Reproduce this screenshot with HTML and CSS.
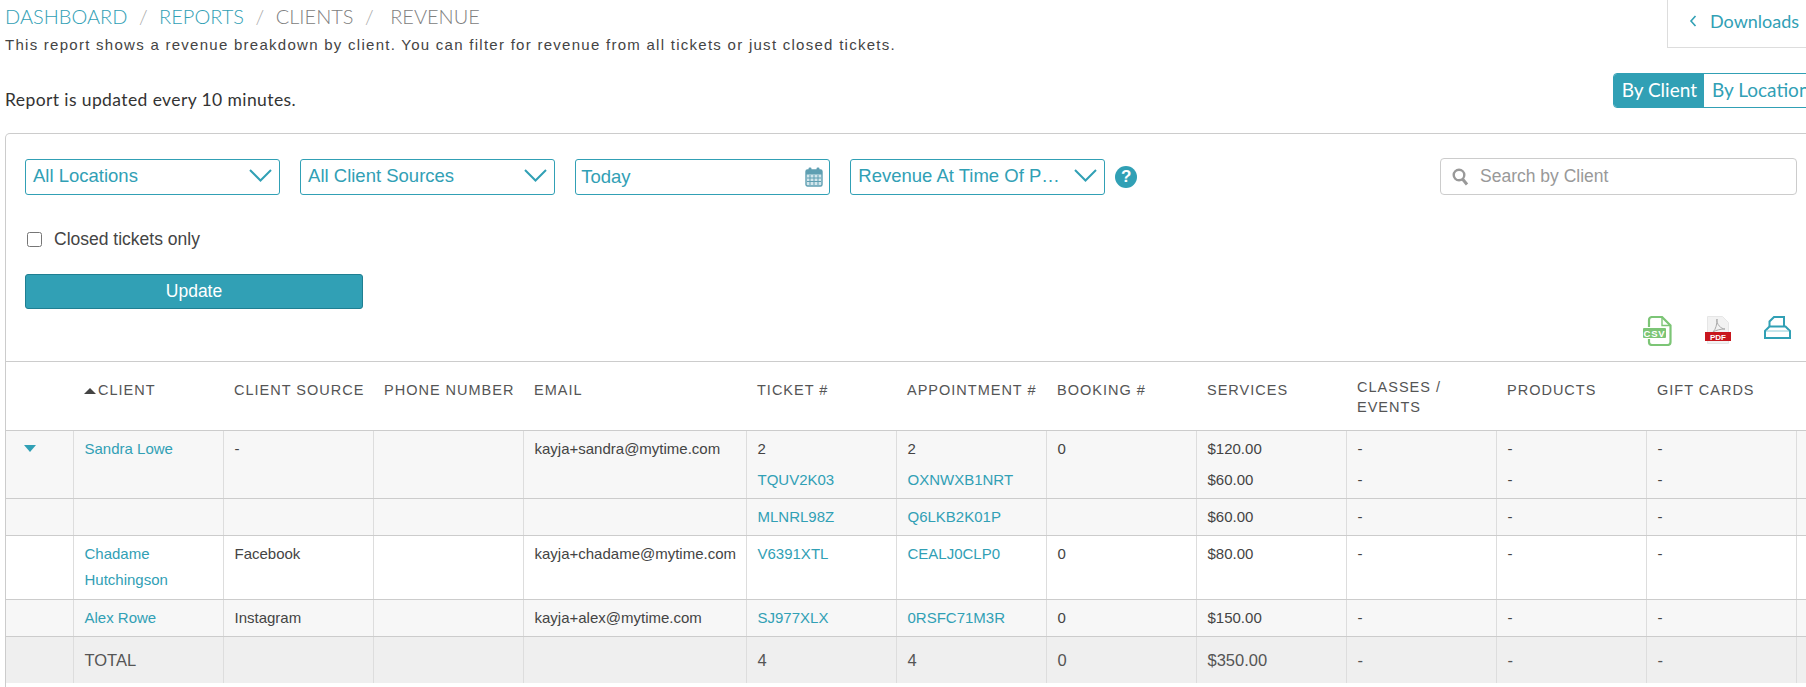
FILE: index.html
```html
<!DOCTYPE html>
<html>
<head>
    <meta charset="utf-8">
    <title>Revenue by client</title>
    <link rel="stylesheet" href="styles.css">
</head>
<body>
<div class="page">
    <div class="topRow">
        <div>
            <div class="crumbs">
                <a>DASHBOARD</a><span class="sep">/</span><a>REPORTS</a><span class="sep">/</span><span>CLIENTS</span><span class="sep">/</span><span class="last">REVENUE</span>
            </div>
            <p class="desc">This report shows a revenue breakdown by client. You can filter for revenue from all tickets or just closed tickets.</p>
        </div>
        <div class="downloads">
            <svg width="8" height="14" viewBox="0 0 8 14"><path d="M6.500 2 2 7l4.500 5" fill="none" stroke="#31a0b5" stroke-width="1.600"/></svg>
            <span>Downloads</span>
        </div>
    </div>
    <div class="noticeRow">
        <div class="notice">Report is updated every 10 minutes.</div>
        <div class="toggle">
            <span class="toggleBtn active">By Client</span>
            <span class="toggleBtn">By Location</span>
        </div>
    </div>

    <div class="panel">
        <div class="filters">
            <div class="pick">
                <span class="pickText">All Locations</span>
                <svg class="chev" width="23" height="13" viewBox="0 0 23 13"><path d="M1 1l10.500 10.500L22 1" fill="none" stroke="#31a0b5" stroke-width="2"/></svg>
            </div>
            <div class="pick">
                <span class="pickText">All Client Sources</span>
                <svg class="chev" width="23" height="13" viewBox="0 0 23 13"><path d="M1 1l10.500 10.500L22 1" fill="none" stroke="#31a0b5" stroke-width="2"/></svg>
            </div>
            <div class="pick date">
                <span class="pickText">Today</span>
                <svg width="18" height="20" viewBox="0 0 18 20">
                    <rect x="1" y="3" width="16" height="16" rx="1.500" fill="#d3e6ec" stroke="#5f9fb2" stroke-width="1.400"/>
                    <rect x="1" y="3" width="16" height="4.500" fill="#5f9fb2"/>
                    <path d="M5 8v10M9 8v10M13 8v10M2 11h14M2 14.500h14" stroke="#5f9fb2"/>
                    <rect x="3.500" y="0.500" width="3" height="5" rx="1.200" fill="#5f9fb2"/>
                    <rect x="11.500" y="0.500" width="3" height="5" rx="1.200" fill="#5f9fb2"/>
                </svg>
            </div>
            <div class="pick">
                <span class="pickText">Revenue At Time Of P…</span>
                <svg class="chev" width="23" height="13" viewBox="0 0 23 13"><path d="M1 1l10.500 10.500L22 1" fill="none" stroke="#31a0b5" stroke-width="2"/></svg>
            </div>
            <div class="help">?</div>
            <div class="search">
                <svg width="17" height="18" viewBox="0 0 17 18"><circle cx="7" cy="7" r="5.300" fill="none" stroke="#999" stroke-width="2.400"/><path d="M10.500 11l4.500 5.500" stroke="#999" stroke-width="3"/></svg>
                <span>Search by Client</span>
            </div>
        </div>
        <label class="closed"><input type="checkbox"> Closed tickets only</label>
        <button class="update">Update</button>
        <div class="exports">
            <svg width="29" height="30" viewBox="0 0 29 30">
                <path d="M6 11V4a3 3 0 0 1 3-3h10l8.500 8.500V26a3 3 0 0 1-3 3H9a3 3 0 0 1-3-3v-3" fill="none" stroke="#7cc576" stroke-width="2.200"/>
                <path d="M19 1v8.500h8.500" fill="none" stroke="#7cc576" stroke-width="1.400"/>
                <rect x="0" y="12" width="23" height="10" rx="1" fill="#7cc576"/>
                <text x="11.500" y="20.500" class="csvText">CSV</text>
            </svg>
            <svg width="26" height="28" viewBox="0 0 26 28">
                <path d="M2.500 .5h15l6 6v21h-21z" fill="#f2f2f2" stroke="#e6e6e6"/>
                <path d="M12 3c-1 5 4 10 8 10-4 0-9 1-12 3 3-3 4-8 4-13z" fill="none" stroke="#aaa"/>
                <rect x="0" y="16" width="26" height="9" fill="#c8161d"/>
                <text x="13" y="23.500" class="pdfText">PDF</text>
            </svg>
            <svg width="27" height="23" viewBox="0 0 27 23">
                <path d="M5.500 10.500V5.500L10 1h10v9.500" fill="none" stroke="#31a0b5" stroke-width="2"/>
                <path d="M5.500 10.500 1 15v7h25v-7l-4.500-4.500z" fill="none" stroke="#31a0b5" stroke-width="2"/>
                <path d="M2 15h23" stroke="#8ccad6"/>
            </svg>
        </div>

        <table class="report">
            <colgroup>
                <col class="colArrow"><col class="colStd"><col class="colStd"><col class="colStd"><col class="colEmail">
                <col class="colStd"><col class="colStd"><col class="colStd"><col class="colStd"><col class="colStd"><col class="colStd"><col class="colStd"><col class="colEnd">
            </colgroup>
            <thead>
                <tr>
                    <th></th>
                    <th><span class="sortUp"></span>CLIENT</th>
                    <th>CLIENT SOURCE</th>
                    <th>PHONE NUMBER</th>
                    <th>EMAIL</th>
                    <th>TICKET #</th>
                    <th>APPOINTMENT #</th>
                    <th>BOOKING #</th>
                    <th>SERVICES</th>
                    <th><span class="twoLine">CLASSES / EVENTS</span></th>
                    <th>PRODUCTS</th>
                    <th>GIFT CARDS</th>
                    <th></th>
                </tr>
            </thead>
            <tbody>
                <tr class="grey">
                    <td class="arrowCell"><span class="sortDown"></span></td>
                    <td><a>Sandra Lowe</a></td>
                    <td>-</td>
                    <td></td>
                    <td>kayja+sandra@mytime.com</td>
                    <td><div class="line">2</div><a>TQUV2K03</a></td>
                    <td><div class="line">2</div><a>OXNWXB1NRT</a></td>
                    <td>0</td>
                    <td><div class="line">$120.00</div>$60.00</td>
                    <td><div class="line">-</div>-</td>
                    <td><div class="line">-</div>-</td>
                    <td><div class="line">-</div>-</td>
                    <td></td>
                </tr>
                <tr class="grey">
                    <td></td><td></td><td></td><td></td><td></td>
                    <td><a>MLNRL98Z</a></td>
                    <td><a>Q6LKB2K01P</a></td>
                    <td></td>
                    <td>$60.00</td>
                    <td>-</td><td>-</td><td>-</td><td></td>
                </tr>
                <tr class="tall">
                    <td></td>
                    <td><a>Chadame Hutchingson</a></td>
                    <td>Facebook</td>
                    <td></td>
                    <td>kayja+chadame@mytime.com</td>
                    <td><a>V6391XTL</a></td>
                    <td><a>CEALJ0CLP0</a></td>
                    <td>0</td>
                    <td>$80.00</td>
                    <td>-</td><td>-</td><td>-</td><td></td>
                </tr>
                <tr class="grey">
                    <td></td>
                    <td><a>Alex Rowe</a></td>
                    <td>Instagram</td>
                    <td></td>
                    <td>kayja+alex@mytime.com</td>
                    <td><a>SJ977XLX</a></td>
                    <td><a>0RSFC71M3R</a></td>
                    <td>0</td>
                    <td>$150.00</td>
                    <td>-</td><td>-</td><td>-</td><td></td>
                </tr>
                <tr class="total">
                    <td></td>
                    <td>TOTAL</td>
                    <td></td><td></td><td></td>
                    <td>4</td>
                    <td>4</td>
                    <td>0</td>
                    <td>$350.00</td>
                    <td>-</td><td>-</td><td>-</td><td></td>
                </tr>
            </tbody>
        </table>
    </div>
</div>
</body>
</html>
```

FILE: styles.css
```css
html, body {
    margin: 0;
    background: #fff;
    overflow: hidden;
}
.page {
    width: 1813px;
    padding-left: 5px;
    font-family: "Liberation Sans", Arial, sans-serif;
    color: #444;
}
a {
    color: #31a0b5;
}
.topRow {
    display: flex;
    justify-content: space-between;
    height: 48px;
}
.crumbs {
    padding-top: 4px;
    font-family: Lato, sans-serif;
    font-size: 20px;
    font-weight: 300;
    line-height: 24px;
    color: #808080;
}
.crumbs .sep {
    margin: 0 11.500px;
    color: #aaa;
}
.crumbs .last {
    margin-left: 5px;
}
.desc {
    margin: 7px 0 0;
    font-size: 15px;
    line-height: 20px;
    letter-spacing: 1.270px;
}
.downloads {
    display: flex;
    align-items: center;
    gap: 13px;
    box-sizing: border-box;
    width: 151px;
    height: 48px;
    padding: 0 0 6px 21px;
    border-left: 1px solid #ddd;
    border-bottom: 1px solid #ddd;
    font-family: Lato, sans-serif;
    font-size: 18px;
    color: #31a0b5;
}
.noticeRow {
    display: flex;
    justify-content: space-between;
    padding-top: 25px;
    height: 60px;
}
.notice {
    padding-top: 16px;
    font-family: Lato, sans-serif;
    font-size: 17.500px;
    line-height: 22px;
    letter-spacing: 0.400px;
    color: #333;
}
.toggle {
    display: flex;
    box-sizing: border-box;
    height: 35px;
    border: 1px solid #31a0b5;
    border-radius: 4px;
    overflow: hidden;
    font-family: Lato, sans-serif;
    font-size: 19px;
    line-height: 31px;
    color: #31a0b5;
}
.toggleBtn {
    padding: 0 7.500px;
}
.toggleBtn.active {
    background: #31a0b5;
    color: #fff;
}
.panel {
    box-sizing: border-box;
    height: 560px;
    border: 1px solid #ccc;
    border-bottom: 0;
    border-radius: 5px 5px 0 0;
}
.filters {
    display: flex;
    align-items: center;
    padding: 24px 20px 0 19px;
}
.pick {
    display: flex;
    align-items: center;
    justify-content: space-between;
    box-sizing: border-box;
    width: 255px;
    height: 36px;
    margin-right: 20.100px;
    padding: 0 7px 2px 7px;
    border: 1px solid #31a0b5;
    border-radius: 3px;
    font-size: 18.500px;
    color: #31a0b5;
}
.pick:nth-child(4) {
    margin-right: 10px;
}
.pick.date {
    padding: 0 6px 0 5px;
}
.help {
    width: 22px;
    height: 22px;
    border-radius: 50%;
    background: #31a0b5;
    color: #fff;
    font-size: 17px;
    font-weight: bold;
    line-height: 22px;
    text-align: center;
}
.search {
    display: flex;
    align-items: center;
    gap: 11px;
    box-sizing: border-box;
    width: 357px;
    height: 37px;
    margin-left: auto;
    padding-left: 11px;
    border: 1px solid #ccc;
    border-radius: 4px;
    font-size: 17.500px;
    color: #999;
}
.closed {
    display: flex;
    align-items: center;
    gap: 12px;
    margin: 33px 0 0 21px;
    font-size: 17.500px;
    line-height: 22px;
    color: #444;
}
.closed input {
    width: 15px;
    height: 15px;
    margin: 0;
}
.update {
    display: block;
    width: 338px;
    height: 35px;
    margin: 24px 0 0 19px;
    border: 1px solid #1f7f92;
    border-radius: 3px;
    background: #31a0b5;
    color: #fff;
    font-family: "Liberation Sans", Arial, sans-serif;
    font-size: 17.500px;
}
.exports {
    display: flex;
    align-items: flex-start;
    box-sizing: border-box;
    width: 1812px;
    height: 52px;
    padding: 7px 0 0 1637px;
    gap: 33px;
}
.csvText, .pdfText {
    fill: #fff;
    font-family: "Liberation Sans", Arial, sans-serif;
    font-weight: bold;
    text-anchor: middle;
}
.csvText {
    font-size: 9.500px;
    letter-spacing: 0.800px;
}
.pdfText {
    font-size: 8px;
}
.report {
    table-layout: fixed;
    border-collapse: collapse;
    width: 1815px;
    font-size: 15px;
    border-top: 1px solid #ccc;
}
.colArrow { width: 67px; }
.colStd { width: 150px; }
.colEmail { width: 223px; }
.colEnd { width: 25px; }
.report th {
    box-sizing: border-box;
    height: 69px;
    padding: 18px 0 0 11px;
    vertical-align: top;
    text-align: left;
    font-size: 14.500px;
    font-weight: 400;
    line-height: 20px;
    letter-spacing: 1px;
    color: #555;
    border-bottom: 1px solid #ccc;
}
.twoLine {
    display: block;
    width: 110px;
    margin-top: -3px;
}
.report td {
    padding: 5px 5px 5px 11px;
    vertical-align: top;
    line-height: 26px;
    border-left: 1px solid #ddd;
    border-bottom: 1px solid #ccc;
    color: #444;
}
.report td:first-child {
    border-left: 0;
}
.line {
    margin-bottom: 5px;
}
.grey td {
    background: #f7f7f7;
}
.tall td {
    height: 64px;
    box-sizing: border-box;
}
.total td {
    height: 46px;
    box-sizing: border-box;
    padding-top: 10px;
    background: #efefef;
    border-bottom: 0;
    font-size: 16.500px;
    color: #555;
}
.sortUp {
    display: inline-block;
    margin-right: 2px;
    border: 6px solid transparent;
    border-top: 0;
    border-bottom: 6px solid #444;
    vertical-align: 1px;
}
.sortDown {
    display: inline-block;
    margin-left: 7px;
    border: 6px solid transparent;
    border-bottom: 0;
    border-top: 7px solid #31a0b5;
    vertical-align: 2px;
}
```
